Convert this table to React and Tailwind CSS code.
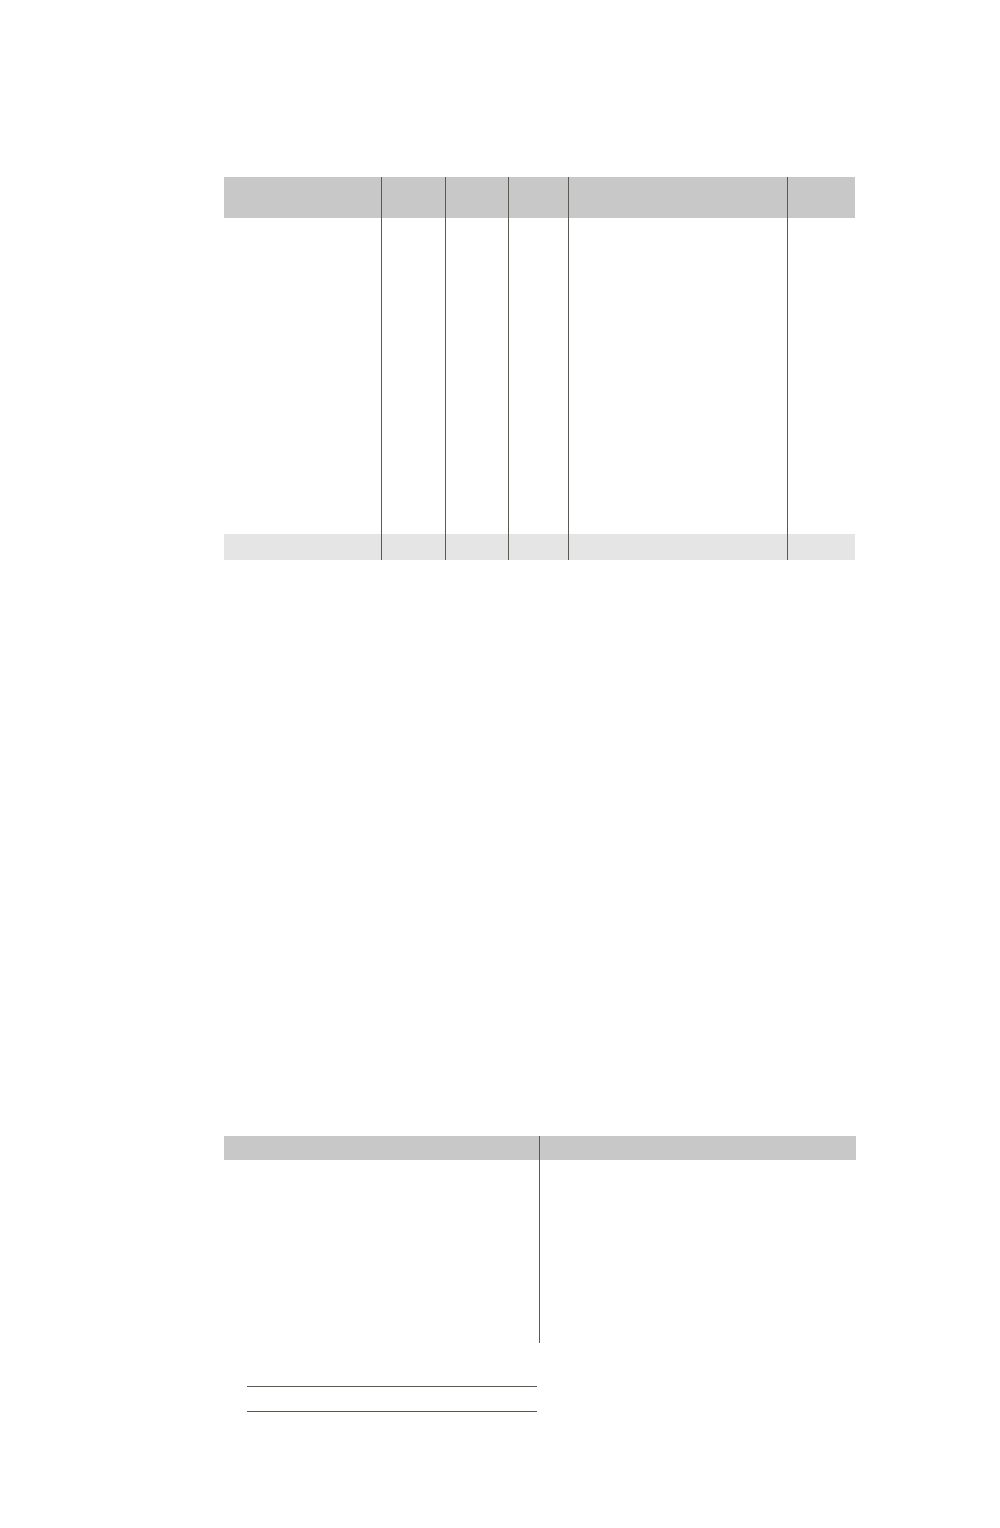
// Blank printed form: a six-column ledger table and a two-column table with signature lines.
const ledgerCols = [157, 64, 63, 60, 219, 68];

const LedgerTable = () => (
  <div className="flex w-[631px]">
    {ledgerCols.map((w, i) => (
      <div
        key={i}
        className={`flex flex-col ${i > 0 ? 'border-l border-[#5c5955]' : ''}`}
        style={{ width: w }}
      >
        <div className="h-[41px] bg-[#c8c8c8]" />
        <div className="h-[316px] bg-white" />
        <div className="h-[26px] bg-[#e5e5e5]" />
      </div>
    ))}
  </div>
);

const SummaryTable = () => (
  <div className="flex w-[632px]">
    <div className="flex w-[315px] flex-col">
      <div className="h-[24px] bg-[#c8c8c8]" />
      <div className="h-[183px]" />
    </div>
    <div className="flex w-[317px] flex-col border-l border-[#5c5955]">
      <div className="h-[24px] bg-[#c8c8c8]" />
      <div className="h-[183px]" />
    </div>
  </div>
);

const SignatureLines = () => (
  <div className="ml-[23px] flex w-[290px] flex-col gap-[24px]">
    <div className="h-px bg-[#5c5955]" />
    <div className="h-px bg-[#5c5955]" />
  </div>
);

export default function App() {
  return (
    <div
      className="min-h-[1528px] w-[1000px] bg-white pl-[224px] pt-[177px]"
      style={{ fontFamily: "'Liberation Sans', Arial, sans-serif" }}
    >
      <LedgerTable />
      <div className="h-[576px]" />
      <SummaryTable />
      <div className="h-[43px]" />
      <SignatureLines />
    </div>
  );
}
